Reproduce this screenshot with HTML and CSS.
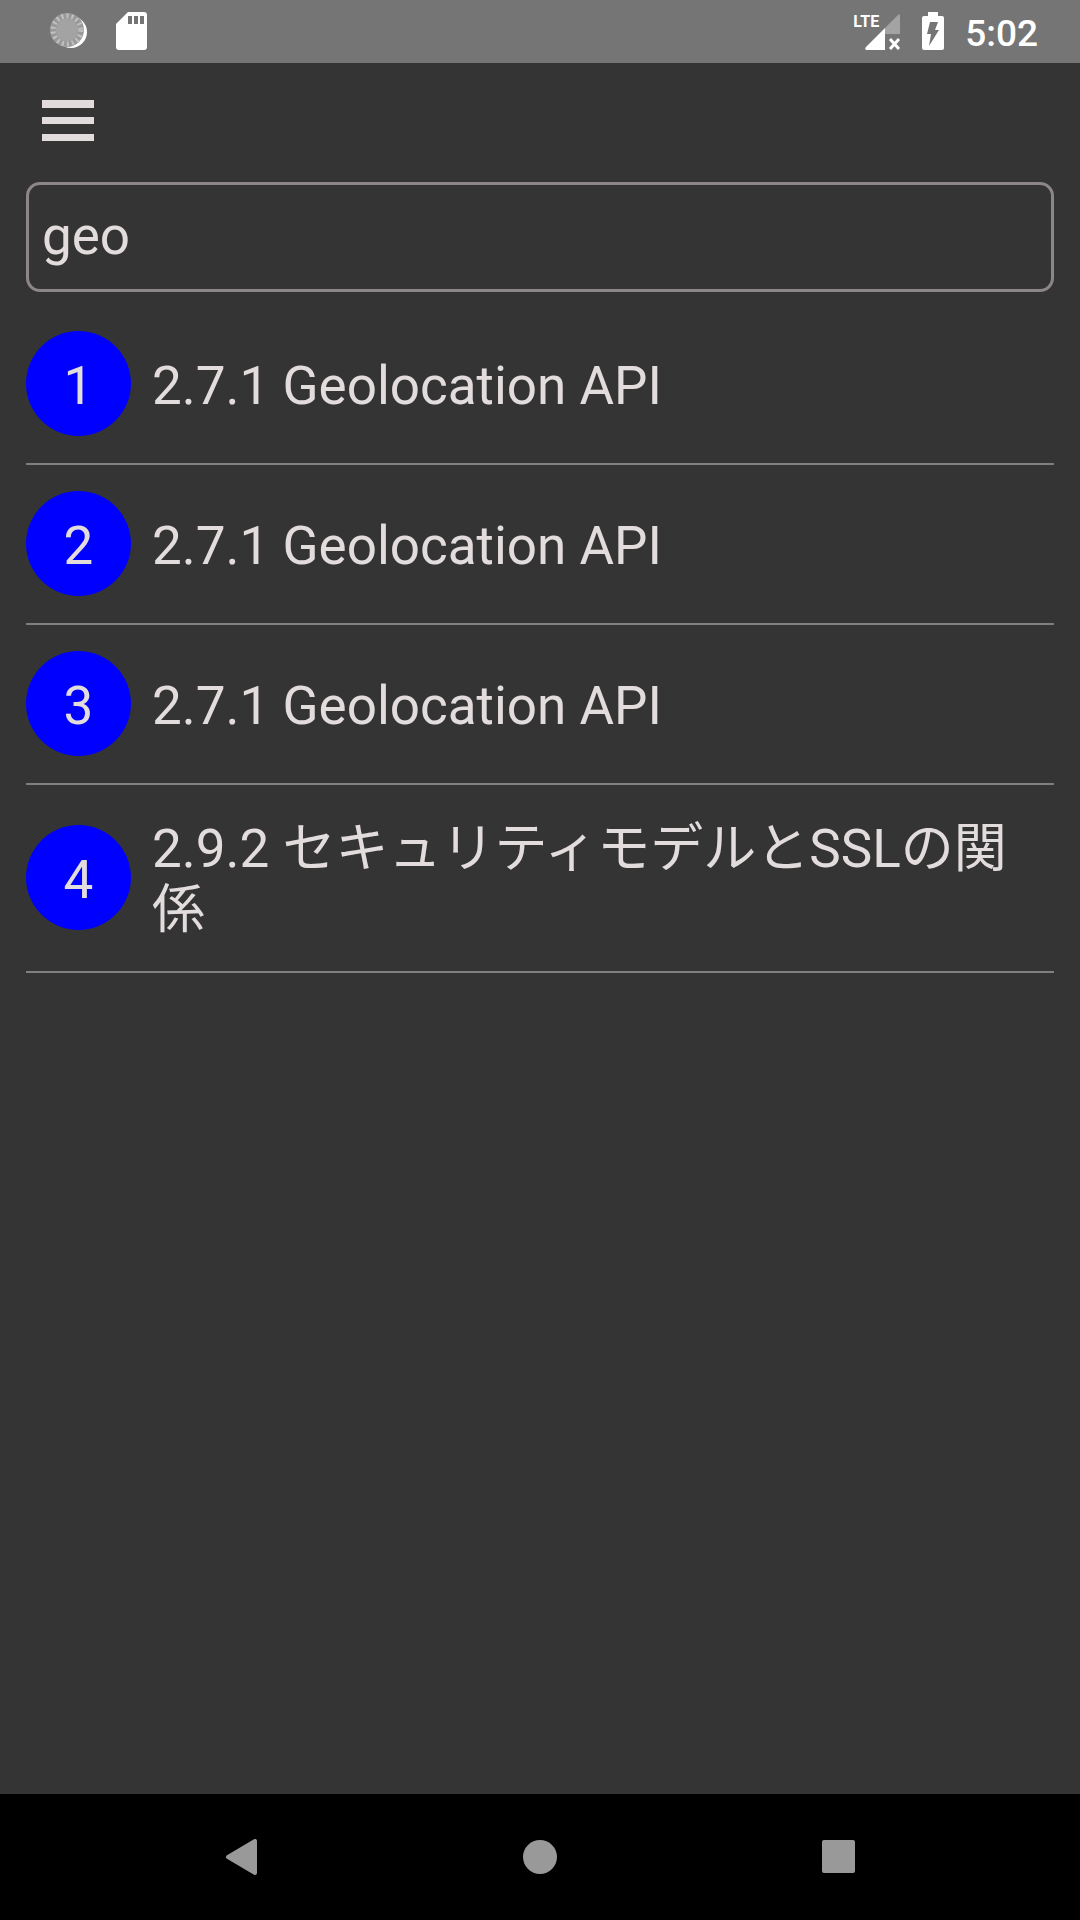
FILE: index.html
```html
<!DOCTYPE html>
<html lang="ja">
<head>
  <meta charset="UTF-8" />
  <meta name="viewport" content="width=device-width, initial-scale=1.0" />
  <title>Search</title>
  <link rel="stylesheet" href="styles.css">
</head>
<body>
  <!-- Status Bar -->
  <div class="status-bar">
    <div class="status-bar__group">
      <svg class="sync-icon" width="40" height="40" viewBox="0 0 40 40">
        <circle cx="22" cy="20" r="16" fill="#fff" />
        <circle cx="18" cy="18" r="17" fill="#999" />
        <circle cx="18" cy="18" r="14" fill="none" stroke="#c0c0c0" stroke-width="5" stroke-dasharray="2 3" />
        <circle cx="18" cy="18" r="11" fill="#a3a3a3" />
      </svg>
      <svg width="31" height="38" viewBox="0 0 31 38">
        <path fill="#fff" d="M12 0h16a3 3 0 0 1 3 3v32a3 3 0 0 1-3 3H3a3 3 0 0 1-3-3V12z" />
        <path fill="#757575" d="M12 4h4v8h-4zM18 4h4v8h-4zM24 4h4v8h-4z" />
      </svg>
    </div>
    <div class="status-bar__group">
      <div class="signal">
        <span class="signal__label">LTE</span>
        <svg width="36" height="38" viewBox="0 0 36 38">
          <path fill="#a3a3a3" d="M35 4q0-3-2-1L20 16v6h15z" />
          <path fill="#fff" d="M20 16v22H2q-3 0-1-3z" />
          <path stroke="#fff" stroke-width="3" d="M25 27l9 10M34 27l-9 10" />
        </svg>
      </div>
      <svg width="22" height="38" viewBox="0 0 22 38">
        <path fill="#fff" d="M6 0h10v4h4a2 2 0 0 1 2 2v30a2 2 0 0 1-2 2H2a2 2 0 0 1-2-2V6a2 2 0 0 1 2-2h4z" />
        <path fill="#757575" d="M8 10h8l-3 8h4L7 34l2-12H5z" />
      </svg>
      <span class="clock">5:02</span>
    </div>
  </div>

  <!-- Main Content -->
  <div class="main">
    <div class="toolbar">
      <button class="menu-btn" type="button" aria-label="Menu">
        <svg width="52" height="41" viewBox="0 0 52 41">
          <path fill="#e3dcdc" d="M0 0h52v8H0zM0 17h52v7H0zM0 34h52v7H0z" />
        </svg>
      </button>
    </div>

    <!-- Search Bar -->
    <input class="search-input" type="text" aria-label="Search" value="geo" />

    <!-- Search Results -->
    <ul class="results">
      <li><a class="result" href="#">
        <span class="result__number">1</span>
        <span class="result__title">2.7.1 Geolocation API</span>
      </a></li>
      <li><a class="result" href="#">
        <span class="result__number">2</span>
        <span class="result__title">2.7.1 Geolocation API</span>
      </a></li>
      <li><a class="result" href="#">
        <span class="result__number">3</span>
        <span class="result__title">2.7.1 Geolocation API</span>
      </a></li>
      <li><a class="result" href="#">
        <span class="result__number">4</span>
        <span class="result__title">2.9.2 セキュリティモデルとSSLの関係</span>
      </a></li>
    </ul>
  </div>

  <!-- Navigation Bar -->
  <div class="nav-bar">
    <button class="nav-bar__btn" type="button" aria-label="Back">
      <svg width="36" height="36" viewBox="0 0 36 36">
        <path fill="#999" stroke="#999" stroke-width="4" stroke-linejoin="round" d="M5 18L32 2v32z" />
      </svg>
    </button>
    <button class="nav-bar__btn" type="button" aria-label="Home">
      <svg width="36" height="36" viewBox="0 0 36 36">
        <circle cx="18" cy="18" r="17" fill="#999" />
      </svg>
    </button>
    <button class="nav-bar__btn" type="button" aria-label="Recent apps">
      <svg width="36" height="36" viewBox="0 0 36 36">
        <rect x="1" y="1" width="33" height="33" rx="2" fill="#999" />
      </svg>
    </button>
  </div>
</body>
</html>
```
FILE: styles.css
```css
:root {
  --bg-color: #343435;
  --text-color: #e3dcdc;
  --status-bg: #757575;
  --input-border: #8d8686;
  --line-color: #808080;
  --number-bg: #0000ff;
}

* {
  box-sizing: border-box;
}

body {
  font-family: Roboto, "Noto Sans CJK JP", sans-serif;
  margin: 0;
  min-height: 100vh;
  display: flex;
  flex-direction: column;
  background-color: var(--bg-color);
  color: var(--text-color);
  font-size: 53px;
  line-height: 61px;
}

svg {
  display: block;
}

button {
  background: none;
  border: none;
  padding: 0;
  cursor: pointer;
}

.status-bar {
  display: flex;
  justify-content: space-between;
  height: 63px;
  padding: 12px 42px 0 49px;
  background-color: var(--status-bg);
  color: #fff;
}

.status-bar__group {
  display: flex;
  align-items: flex-start;
  gap: 21px;
}

.sync-icon {
  margin-right: 6px;
}

.signal {
  position: relative;
}

.signal__label {
  position: absolute;
  top: 0;
  right: 22px;
  font-family: "Liberation Sans Narrow", Roboto, sans-serif;
  font-size: 16px;
  font-weight: 700;
  line-height: 20px;
}

.clock {
  font-size: 37px;
  font-weight: 500;
  line-height: 44px;
}

.main {
  flex: 1;
  padding: 0 26px;
}

.toolbar {
  padding: 37px 16px 41px;
}

.menu-btn {
  display: block;
}

.search-input {
  display: block;
  width: 100%;
  height: 110px;
  padding: 0 13px 2px;
  border: 3px solid var(--input-border);
  border-radius: 14px;
  background: none;
  color: var(--text-color);
  font: inherit;
  outline: none;
}

.results {
  list-style: none;
  margin: 13px 0 0;
  padding: 0;
}

.result {
  display: flex;
  align-items: center;
  gap: 21px;
  padding: 26px 0 27px;
  border-bottom: 2px solid var(--line-color);
  color: inherit;
  text-decoration: none;
}

.result__number {
  flex: none;
  width: 105px;
  height: 105px;
  padding-top: 5px;
  border-radius: 50%;
  background-color: var(--number-bg);
  line-height: 101px;
  text-align: center;
}

.result__title {
  flex: 1;
  padding: 8px 0 3px;
}

.nav-bar {
  display: flex;
  height: 126px;
  padding: 0 92px;
  background-color: #000;
}

.nav-bar__btn {
  flex: 1;
  display: flex;
  align-items: center;
  justify-content: center;
}
```
